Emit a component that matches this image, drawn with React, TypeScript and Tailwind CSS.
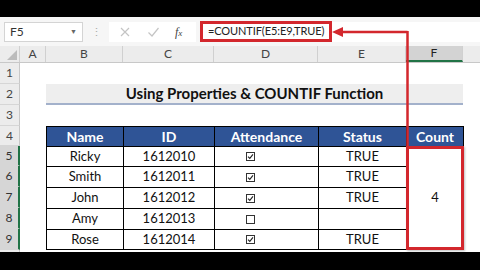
import React from 'react';

const font = { fontFamily: 'Lato, "Open Sans", sans-serif' };

const rowHeights = ['h-[21px]', 'h-[21px]', 'h-[21px]', 'h-[20px]', 'h-[20px]', 'h-[21px]', 'h-[21px]', 'h-[21px]', 'h-[21px]'];

const people = [
  { name: 'Ricky', id: '1612010', here: true, status: 'TRUE' },
  { name: 'Smith', id: '1612011', here: true, status: 'TRUE' },
  { name: 'John', id: '1612012', here: true, status: 'TRUE' },
  { name: 'Amy', id: '1612013', here: false, status: '' },
  { name: 'Rose', id: '1612014', here: true, status: 'TRUE' },
];

const CheckBox = ({ checked }: { checked: boolean }) => (
  <span className="flex h-[9px] w-[9px] items-center justify-center border border-[#333] bg-white">
    {checked && (
      <svg width="7" height="7" viewBox="0 0 7 7">
        <path d="M1 3.6 L2.8 5.4 L6 1.4" fill="none" stroke="#222" strokeWidth="1.1" />
      </svg>
    )}
  </span>
);

export default function App() {
  return (
    <div className="relative flex h-[270px] w-[480px] flex-col overflow-hidden bg-black" style={font}>
      <div className="h-[17px] shrink-0 bg-black" />

      {/* formula bar */}
      <div className="flex h-[29px] shrink-0 items-center bg-[#f6f6f6] pl-[4px]">
        <div className="flex h-[20px] w-[79px] items-center justify-between border border-[#d4d4d4] bg-white pl-[5px] pr-[5px] text-[12px] text-[#333]">
          <span>F5</span>
          <span className="text-[7px] text-[#666]">▼</span>
        </div>
        <div className="flex w-[26px] justify-center text-[11px] leading-none text-[#aaa]">⋮</div>
        <div className="flex h-[20px] w-[87px] items-center bg-white text-[#bbb]">
          <svg width="12" height="12" viewBox="0 0 12 12" className="ml-[10px]">
            <path d="M2 2 L10 10 M10 2 L2 10" stroke="#c4c4c4" strokeWidth="1.2" />
          </svg>
          <svg width="13" height="12" viewBox="0 0 13 12" className="ml-[16px]">
            <path d="M1.5 6.5 L5 10 L11.5 2" fill="none" stroke="#c4c4c4" strokeWidth="1.2" />
          </svg>
          <span className="ml-[15px] text-[12px] italic text-[#444]" style={{ fontFamily: '"Liberation Serif", serif' }}>
            f<span className="text-[9px]">x</span>
          </span>
        </div>
        <div className="ml-[4px] flex h-[20px] flex-1 items-center bg-white">
          <div className="flex h-[21px] w-[132px] items-center border-[3px] border-[#d3272d] pl-[5px] text-[11px] tracking-[-0.1px] text-[#222]">
            =COUNTIF(E5:E9,TRUE)
          </div>
        </div>
      </div>

      {/* column headers */}
      <div className="flex h-[17px] shrink-0 border-b border-[#c8c8c8] bg-[#ececec] text-[12px] text-[#444]">
        <div className="relative w-[20px] border-r border-[#d0d0d0]">
          <span className="absolute bottom-[2px] right-[2px] h-0 w-0 border-b-[10px] border-l-[10px] border-b-[#bcbcbc] border-l-transparent" />
        </div>
        <div className="flex w-[26px] items-center justify-center border-r border-[#d0d0d0]">A</div>
        <div className="flex w-[77px] items-center justify-center border-r border-[#d0d0d0]">B</div>
        <div className="flex w-[91px] items-center justify-center border-r border-[#d0d0d0]">C</div>
        <div className="flex w-[104px] items-center justify-center border-r border-[#d0d0d0]">D</div>
        <div className="flex w-[88px] items-center justify-center border-r border-[#d0d0d0]">E</div>
        <div className="flex w-[57px] items-center justify-center border-b-2 border-r border-b-[#217346] border-r-[#d0d0d0] bg-[#d3d3d3] text-[#222]">F</div>
        <div className="flex-1" />
      </div>

      {/* sheet body */}
      <div className="flex h-[189px] shrink-0 bg-white">
        <div className="flex w-[20px] flex-col bg-[#ececec] text-[12px] text-[#444]">
          {rowHeights.map((h, i) => (
            <div
              key={i}
              className={`flex ${h} items-center justify-center border-b border-[#d6d6d6] ${i >= 4 ? 'border-r-2 border-r-[#217346] bg-[#d6d6d6] text-[#333]' : 'border-r border-r-[#c8c8c8]'}`}
            >
              {i + 1}
            </div>
          ))}
          <div className="flex-1 border-r border-[#c8c8c8]" />
        </div>

        <div className="flex flex-1 flex-col text-[13px] text-[#111]">
          <div className="h-[21px]" />
          <div className="ml-[26px] flex h-[21px] w-[417px] items-center justify-center border-b-2 border-[#a3b1cb] bg-[#eeeeee] text-[15px] font-bold text-[#111]">
            Using Properties &amp; COUNTIF Function
          </div>
          <div className="h-[21px]" />
          <div className="ml-[26px] grid w-[418px] grid-cols-[76px_90px_103px_87px_56px] grid-rows-[19px_19px_20px_20px_20px_19px] gap-px bg-black p-px">
            {['Name', 'ID', 'Attendance', 'Status', 'Count'].map((t) => (
              <div key={t} className="flex items-center justify-center bg-[#2f5496] text-[14px] font-bold text-white">
                {t}
              </div>
            ))}
            {people.map((p, i) => (
              <React.Fragment key={p.id}>
                <div className="col-start-1 flex items-center justify-center bg-white">{p.name}</div>
                <div className="flex items-center justify-center bg-white">{p.id}</div>
                <div className="flex items-center bg-white pl-[31px]">
                  <CheckBox checked={p.here} />
                </div>
                <div className="flex items-center justify-center bg-white">{p.status}</div>
                {i === 0 && (
                  <div className="relative col-start-5 row-span-5 row-start-2 flex items-center justify-center bg-white">
                    4
                    <span className="absolute -inset-[1px] border-[3px] border-[#d3272d] shadow-[1px_1px_2px_rgba(0,0,0,0.25)]" />
                  </div>
                )}
              </React.Fragment>
            ))}
          </div>
        </div>
      </div>

      {/* annotation arrow */}
      <svg className="pointer-events-none absolute left-0 top-0" width="480" height="270">
        <path d="M407.5 32 H340 M407.5 31 V147" fill="none" stroke="#d3272d" strokeWidth="2.5" />
        <polygon points="332,32 343,27 343,37" fill="#d3272d" />
      </svg>
    </div>
  );
}
